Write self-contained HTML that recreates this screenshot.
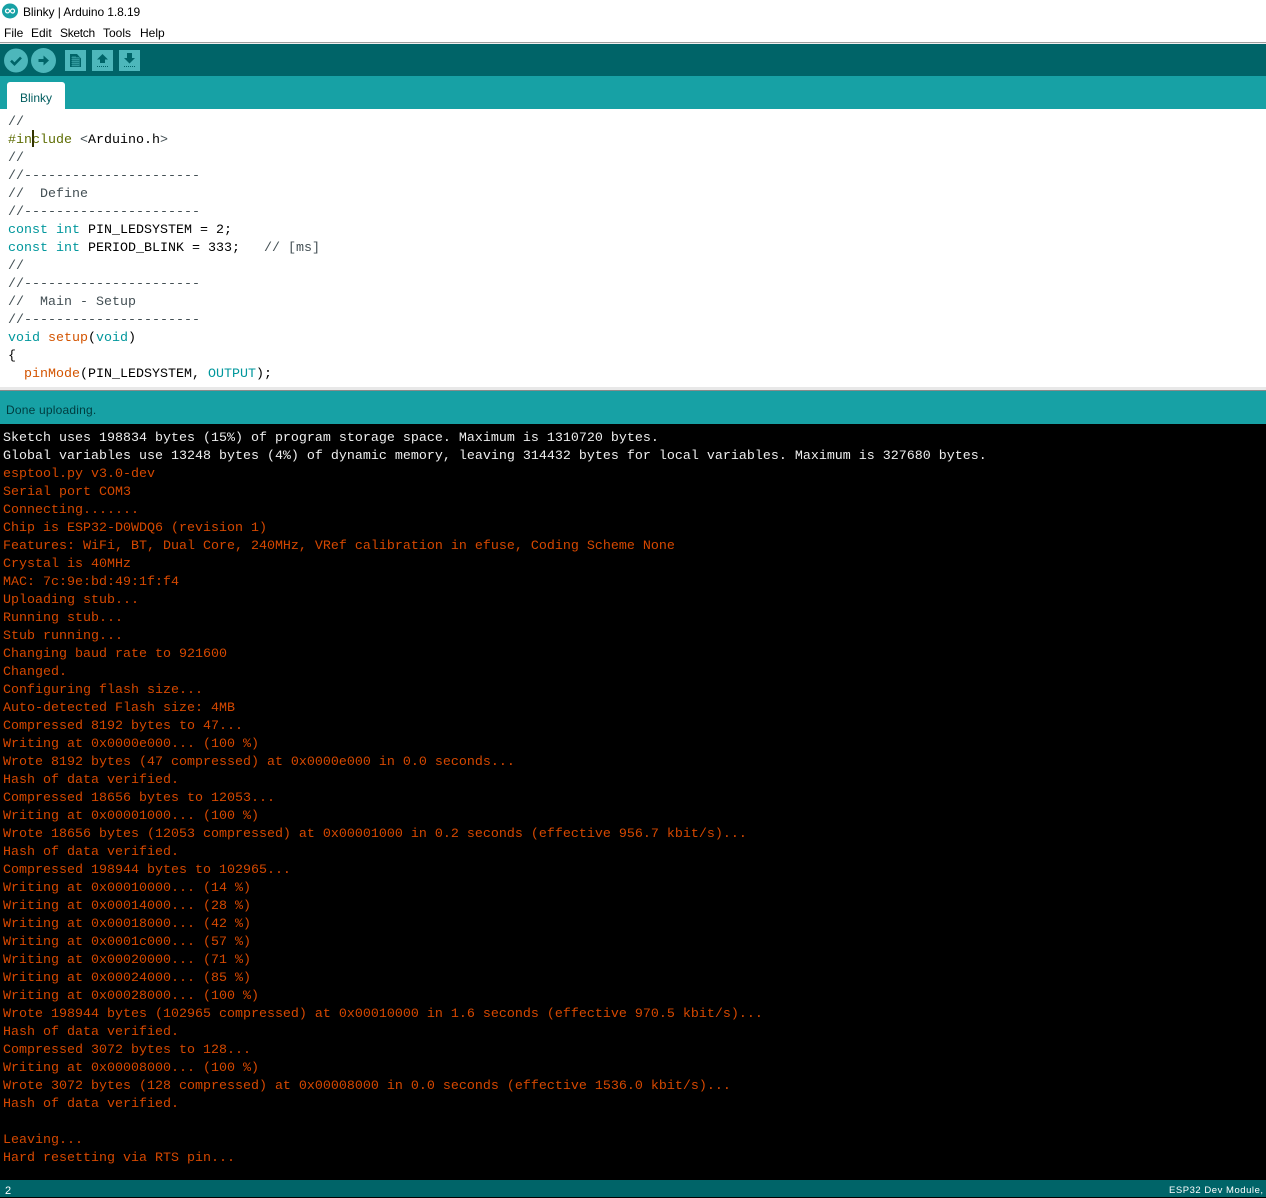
<!DOCTYPE html>
<html><head><meta charset="utf-8"><style>
html,body{margin:0;padding:0;width:1266px;height:1197px;overflow:hidden;background:#000}
.abs{position:absolute}
.sans{font-family:"Liberation Sans",sans-serif}
pre{margin:0;font-family:"Liberation Mono",monospace;font-size:13.33px;line-height:18px;position:absolute;white-space:pre}
.k{color:#00979c}.f{color:#d35400}.d{color:#5e6d03}
.com{color:#434f54}
</style></head><body>
<div class="abs" style="left:0;top:0;width:1266px;height:43px;background:#fff"></div>
<svg class="abs" style="left:2px;top:3px" width="16" height="16" viewBox="0 0 16 16"><ellipse cx="8" cy="8" rx="8" ry="7.500" fill="#17a1a5"/><path d="M3.500 8a2 2 0 0 1 3.600-1.100L8.900 9.100A2 2 0 1 0 8.900 6.900L7.100 9.100A2 2 0 0 1 3.500 8Z" fill="none" stroke="#fff" stroke-width="1.200"/></svg>
<div class="abs sans" style="left:23px;top:4px;font-size:12px;letter-spacing:-.09px;line-height:16px;color:#000;white-space:pre">Blinky | Arduino 1.8.19</div>
<div class="abs sans" style="left:4px;top:25px;font-size:12px;line-height:16px;color:#000;white-space:pre">File</div>
<div class="abs sans" style="left:31px;top:25px;font-size:12px;line-height:16px;color:#000;white-space:pre">Edit</div>
<div class="abs sans" style="left:60px;top:25px;font-size:12px;letter-spacing:-.3px;line-height:16px;color:#000;white-space:pre">Sketch</div>
<div class="abs sans" style="left:103px;top:25px;font-size:12px;line-height:16px;color:#000;white-space:pre">Tools</div>
<div class="abs sans" style="left:140px;top:25px;font-size:12px;line-height:16px;color:#000;white-space:pre">Help</div>
<div class="abs" style="left:0;top:42px;width:1266px;height:1px;background:#a0a0a0"></div>
<div class="abs" style="left:0;top:43px;width:1266px;height:1px;background:#f0f0f0"></div>

<div class="abs" style="left:0;top:44px;width:1266px;height:32px;background:#006468"></div>
<svg class="abs" style="left:0;top:44px" width="150" height="32" viewBox="0 0 150 32">
<circle cx="16" cy="16.500" r="12" fill="#4db7bb"/>
<path d="M11 16.700L14.500 20.200L21 13.500" fill="none" stroke="#006468" stroke-width="2.600"/>
<circle cx="43.500" cy="16.500" r="12.500" fill="#4db7bb"/>
<path d="M38.500 15H43.500V11.500L49 16.500L43.500 21.500V18H38.500Z" fill="#006468"/>
<rect x="65" y="6" width="21" height="21" fill="#4db7bb"/>
<path d="M70 10H77L81 14.500V23H70Z" fill="#006468"/>
<path d="M71.500 13.500H79.500M71.500 15.500H79.500M71.500 17.500H79.500M71.500 19.500H79.500M71.500 21.500H79.500M73 12V22.500M75 12V22.500M77 14V22.500M79 14V22.500" stroke="#4db7bb" stroke-width=".6" fill="none"/>
<rect x="92" y="6" width="21" height="21" fill="#4db7bb"/>
<path d="M102.500 10L108 15.500H105V19H100V15.500H97Z" fill="#006468"/>
<path d="M97 22.500H108" stroke="#006468" stroke-width="1" stroke-dasharray="1 1"/>
<rect x="119" y="6" width="21" height="21" fill="#4db7bb"/>
<path d="M127 9H132V14H135L129.500 19.500L124 14H127Z" fill="#006468"/>
<path d="M124 22.500H135" stroke="#006468" stroke-width="1" stroke-dasharray="1 1"/>
</svg>

<div class="abs" style="left:0;top:76px;width:1266px;height:33px;background:#17a1a5"></div>
<div class="abs" style="left:7px;top:82px;width:58px;height:27px;background:#fff;border-radius:3px 3px 0 0"></div>
<div class="abs sans" style="left:20px;top:90px;font-size:12px;line-height:16px;color:#005c5f;white-space:pre">Blinky</div>

<div class="abs" style="left:0;top:109px;width:1266px;height:280px;background:#fff"></div>
<pre style="left:8px;top:114px;color:#000"><span class="com">//</span>
<span class="d">#include</span> <span class="com">&lt;</span>Arduino.h<span class="com">&gt;</span>
<span class="com">//</span>
<span class="com">//----------------------</span>
<span class="com">//  Define</span>
<span class="com">//----------------------</span>
<span class="k">const</span> <span class="k">int</span> PIN_LEDSYSTEM = 2;
<span class="k">const</span> <span class="k">int</span> PERIOD_BLINK = 333;   <span class="com">// [ms]</span>
<span class="com">//</span>
<span class="com">//----------------------</span>
<span class="com">//  Main - Setup</span>
<span class="com">//----------------------</span>
<span class="k">void</span> <span class="f">setup</span>(<span class="k">void</span>)
{
  <span class="f">pinMode</span>(PIN_LEDSYSTEM, <span class="k">OUTPUT</span>);</pre>
<div class="abs" style="left:32px;top:130px;width:2px;height:17px;background:#333300"></div>

<div class="abs" style="left:0;top:387px;width:1266px;height:3px;background:#e8e8e8"></div>
<div class="abs" style="left:0;top:390px;width:1266px;height:1px;background:#8a8a8a"></div>
<div class="abs" style="left:0;top:391px;width:1266px;height:33px;background:#17a1a5"></div>
<div class="abs sans" style="left:6px;top:402px;font-size:12px;letter-spacing:.2px;line-height:16px;color:#003c3f;white-space:pre">Done uploading.</div>

<div class="abs" style="left:0;top:424px;width:1266px;height:756px;background:#000"></div>
<pre style="left:3px;top:430px;color:#d64800"><span style="color:#eeeeee">Sketch uses 198834 bytes (15%) of program storage space. Maximum is 1310720 bytes.
Global variables use 13248 bytes (4%) of dynamic memory, leaving 314432 bytes for local variables. Maximum is 327680 bytes.</span>
esptool.py v3.0-dev
Serial port COM3
Connecting.......
Chip is ESP32-D0WDQ6 (revision 1)
Features: WiFi, BT, Dual Core, 240MHz, VRef calibration in efuse, Coding Scheme None
Crystal is 40MHz
MAC: 7c:9e:bd:49:1f:f4
Uploading stub...
Running stub...
Stub running...
Changing baud rate to 921600
Changed.
Configuring flash size...
Auto-detected Flash size: 4MB
Compressed 8192 bytes to 47...
Writing at 0x0000e000... (100 %)
Wrote 8192 bytes (47 compressed) at 0x0000e000 in 0.0 seconds...
Hash of data verified.
Compressed 18656 bytes to 12053...
Writing at 0x00001000... (100 %)
Wrote 18656 bytes (12053 compressed) at 0x00001000 in 0.2 seconds (effective 956.7 kbit/s)...
Hash of data verified.
Compressed 198944 bytes to 102965...
Writing at 0x00010000... (14 %)
Writing at 0x00014000... (28 %)
Writing at 0x00018000... (42 %)
Writing at 0x0001c000... (57 %)
Writing at 0x00020000... (71 %)
Writing at 0x00024000... (85 %)
Writing at 0x00028000... (100 %)
Wrote 198944 bytes (102965 compressed) at 0x00010000 in 1.6 seconds (effective 970.5 kbit/s)...
Hash of data verified.
Compressed 3072 bytes to 128...
Writing at 0x00008000... (100 %)
Wrote 3072 bytes (128 compressed) at 0x00008000 in 0.0 seconds (effective 1536.0 kbit/s)...
Hash of data verified.

Leaving...
Hard resetting via RTS pin...</pre>

<div class="abs" style="left:0;top:1180px;width:1266px;height:17px;background:#006468"></div>
<div class="abs sans" style="left:5px;top:1184px;font-size:11px;line-height:14px;color:#fff">2</div>
<div class="abs sans" style="left:1169px;top:1184px;font-size:9.500px;letter-spacing:.53px;line-height:14px;color:#fff;white-space:pre">ESP32 Dev Module,</div>
</body></html>
